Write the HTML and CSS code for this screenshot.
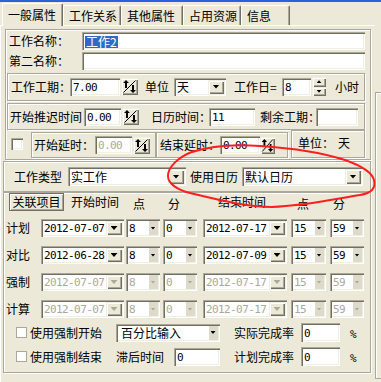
FILE: index.html
```html
<!DOCTYPE html>
<html lang="zh-CN">
<head>
  <meta charset="UTF-8">
  <title>工作属性</title>
  <link rel="stylesheet" href="styles.css">
</head>
<body>
  <svg class="defs" width="0" height="0">
    <symbol id="spin-ico" viewBox="0 0 17 17">
      <path d="M2.5 14.5 L14.5 2.5" stroke="#000" fill="none"/>
      <path d="M5 2 L8 5 H6 V10 H4 V5 H2 Z" fill="#000"/>
      <path d="M12 15 L9 12 H11 V7 H13 V12 H15 Z" fill="#000"/>
    </symbol>
  </svg>

  <div class="win">
    <div class="titlebar"></div>

    <div class="tabs">
      <div class="tab on t1">一般属性</div>
      <div class="tab t2">工作关系</div>
      <div class="tab t3">其他属性</div>
      <div class="tab t4">占用资源</div>
      <div class="tab t5">信息</div>
    </div>

    <div class="main">
      <div class="panel">

        <!-- 名称 / 工期 -->
        <div class="grp grp-a">
          <div class="name-row">
            <span class="lbl name-lbl">工作名称：</span>
            <div class="tb name-tb"><span class="sel">工作2</span></div>
          </div>
          <div class="name-row">
            <span class="lbl name-lbl">第二名称：</span>
            <div class="tb name-tb"></div>
          </div>

          <div class="grp grp-b">
            <span class="lbl" style="width:59px">工作工期：</span>
            <div class="tb num" style="width:50px">7.00</div>
            <div class="spin"><svg width="17" height="17"><use href="#spin-ico"/></svg></div>
            <span class="lbl" style="margin-left:7px">单位</span>
            <div class="combo" style="width:52px;margin-left:5px"><span class="val">天</span><span class="btn"></span></div>
            <span class="lbl" style="width:48px;margin-left:8px">工作日=</span>
            <div class="tb num" style="width:29px">8</div>
            <div class="spin2"><span class="up"></span><span class="dn"></span></div>
            <span class="lbl" style="margin-left:9px">小时</span>
          </div>

          <div class="grp grp-c">
            <span class="lbl" style="width:74px">开始推迟时间</span>
            <div class="tb num" style="width:37px">0.00</div>
            <div class="spin"><svg width="17" height="17"><use href="#spin-ico"/></svg></div>
            <span class="lbl" style="width:58px;margin-left:12px">日历时间：</span>
            <div class="tb num" style="width:46px">11</div>
            <span class="lbl" style="width:56px;margin-left:5px">剩余工期：</span>
            <div class="tb" style="width:42px"></div>
          </div>

          <div class="row-d">
            <div class="chk"></div>
            <div class="grp grp-d">
              <span class="lbl" style="width:61px">开始延时：</span>
              <div class="tb num dis" style="width:37px">0.00</div>
              <div class="spin"><svg width="17" height="17"><use href="#spin-ico"/></svg></div>
            </div>
            <div class="grp grp-e">
              <span class="lbl" style="width:60px">结束延时：</span>
              <div class="tb num" style="width:40px">0.00</div>
              <div class="spin narrow"><svg width="15" height="17" viewBox="0 0 17 17" preserveAspectRatio="none"><use href="#spin-ico"/></svg></div>
            </div>
            <div class="grp grp-f">
              <span class="lbl">单位：</span><span class="lbl unit-val">天</span>
            </div>
          </div>
        </div>

        <!-- 类型 / 日历 -->
        <div class="grp grp-g">
          <span class="lbl" style="width:54px">工作类型</span>
          <div class="combo" style="width:118px;height:19px"><span class="val">实工作</span><span class="btn"></span></div>
          <span class="lbl" style="width:52px;margin-left:4px">使用日历</span>
          <div class="combo" style="width:121px;height:19px"><span class="val">默认日历</span><span class="btn"></span></div>
        </div>

        <!-- 时间 -->
        <div class="grp grp-h">
          <div class="hdr">
            <div class="push">关联项目</div>
            <span class="lbl" style="margin-left:7px">开始时间</span>
            <span class="lbl low" style="margin-left:14px">点</span>
            <span class="lbl low" style="margin-left:23px">分</span>
            <span class="lbl" style="margin-left:38px">结束时间</span>
            <span class="lbl low" style="margin-left:31px">点</span>
            <span class="lbl low" style="margin-left:24px">分</span>
          </div>

          <div class="trow">
            <span class="rl">计划</span>
            <div class="combo c-date"><span class="val num">2012-07-07</span><span class="btn"></span></div>
            <div class="combo sm c-hr"><span class="val num">8</span><span class="btn"></span></div>
            <div class="combo sm c-min"><span class="val num">0</span><span class="btn"></span></div>
            <div class="combo c-edate"><span class="val num">2012-07-17</span><span class="btn"></span></div>
            <div class="combo sm c-ehr"><span class="val num">15</span><span class="btn"></span></div>
            <div class="combo sm c-emin"><span class="val num">59</span><span class="btn"></span></div>
          </div>
          <div class="trow">
            <span class="rl">对比</span>
            <div class="combo c-date"><span class="val num">2012-06-28</span><span class="btn"></span></div>
            <div class="combo sm c-hr"><span class="val num">8</span><span class="btn"></span></div>
            <div class="combo sm c-min"><span class="val num">0</span><span class="btn"></span></div>
            <div class="combo c-edate"><span class="val num">2012-07-09</span><span class="btn"></span></div>
            <div class="combo sm c-ehr"><span class="val num">15</span><span class="btn"></span></div>
            <div class="combo sm c-emin"><span class="val num">59</span><span class="btn"></span></div>
          </div>
          <div class="trow dis">
            <span class="rl">强制</span>
            <div class="combo c-date"><span class="val num">2012-07-07</span><span class="btn"></span></div>
            <div class="combo sm c-hr"><span class="val num">8</span><span class="btn"></span></div>
            <div class="combo sm c-min"><span class="val num">0</span><span class="btn"></span></div>
            <div class="combo c-edate"><span class="val num">2012-07-17</span><span class="btn"></span></div>
            <div class="combo sm c-ehr"><span class="val num">15</span><span class="btn"></span></div>
            <div class="combo sm c-emin"><span class="val num">59</span><span class="btn"></span></div>
          </div>
          <div class="trow dis">
            <span class="rl">计算</span>
            <div class="combo c-date"><span class="val num">2012-07-07</span><span class="btn"></span></div>
            <div class="combo sm c-hr"><span class="val num">8</span><span class="btn"></span></div>
            <div class="combo sm c-min"><span class="val num">0</span><span class="btn"></span></div>
            <div class="combo c-edate"><span class="val num">2012-07-17</span><span class="btn"></span></div>
            <div class="combo sm c-ehr"><span class="val num">15</span><span class="btn"></span></div>
            <div class="combo sm c-emin"><span class="val num">59</span><span class="btn"></span></div>
          </div>

          <div class="opt-row">
            <div class="chk flat"></div>
            <span class="lbl opt-lbl">使用强制开始</span>
            <div class="combo sm pct"><span class="val">百分比输入</span><span class="btn"></span></div>
            <span class="lbl rate-lbl">实际完成率</span>
            <div class="tb num rate-tb">0</div>
            <span class="pc">%</span>
          </div>
          <div class="opt-row">
            <div class="chk flat"></div>
            <span class="lbl opt-lbl">使用强制结束</span>
            <span class="lbl" style="width:48px;margin-left:14px">滞后时间</span>
            <div class="tb num" style="width:46px;margin-left:10px">0</div>
            <span class="lbl rate-lbl">计划完成率</span>
            <div class="tb num rate-tb">0</div>
            <span class="pc">%</span>
          </div>
        </div>

      </div>
      <div class="side"></div>
    </div>

    <svg class="mark" width="381" height="382">
      <path d="M192 152 C210 146 235 144 260 146 C290 148 320 152 345 160 C362 166 372 172 374 180 C376 188 372 193 360 195 C335 199 305 206 272 207 C245 207 215 199 190 193 C178 190 168 184 168 176 C168 168 176 158 194 151"
            fill="none" stroke="#ff1e1e" stroke-width="2" stroke-linecap="round"/>
    </svg>
  </div>
</body>
</html>
```

FILE: styles.css
```css
* {
  margin: 0;
  padding: 0;
  box-sizing: border-box;
}

:root {
  --sunk: inset 1px 1px 0 #ACA899, inset 2px 2px 0 #716F64, inset -1px -1px 0 #fff, inset -2px -2px 0 #F1EFE2;
  --raised: inset 1px 1px 0 #F1EFE2, inset 2px 2px 0 #fff, inset -1px -1px 0 #716F64, inset -2px -2px 0 #ACA899;
}

body {
  background: #ECE9D8;
  font: 12px/1 "Noto Sans CJK SC", "Liberation Sans", sans-serif;
  color: #000;
}

.defs {
  position: absolute;
}

.win {
  position: relative;
  width: 381px;
  height: 382px;
  overflow: hidden;
}

.titlebar {
  height: 2px;
  background: #2a62d8;
}

/* tabs */
.tabs {
  display: flex;
  align-items: flex-end;
  height: 23px;
  padding-left: 2px;
}

.tab {
  height: 20px;
  padding: 4px 0 0 5px;
  border-top: 1px solid #fff;
  border-left: 1px solid #fff;
  border-right: 1px solid #716F64;
  border-radius: 2px 2px 0 0;
  box-shadow: inset -1px 0 0 #ACA899;
  white-space: nowrap;
}

.tab.on {
  position: relative;
  z-index: 1;
  height: 23px;
  margin-bottom: -1px;
  padding-top: 5px;
  background: #ECE9D8;
}

.t1 { width: 61px; }
.t2 { width: 58px; }
.t3 { width: 62px; }
.t4 { width: 58px; }
.t5 { width: 49px; }

.main {
  display: flex;
  height: 357px;
}

.panel {
  width: 375px;
  flex: none;
  border-top: 1px solid #fff;
  border-left: 1px solid #fff;
  padding: 3px 0 0 4px;
}

.side {
  flex: 1;
  margin-top: 67px;
  height: 287px;
  border-left: 1px solid #ACA899;
  border-top: 1px solid #ACA899;
  border-bottom: 1px solid #ACA899;
  box-shadow: inset 1px 1px 0 #fff;
}

/* group boxes */
.grp {
  border: 1px solid #ACA899;
  box-shadow: inset 1px 1px 0 #fff, 1px 1px 0 #fff;
  flex: none;
}

.grp-a {
  width: 366px;
  height: 131px;
  padding: 2px 0 0 1px;
}

.name-row {
  display: flex;
  align-items: center;
  height: 18px;
  padding-left: 2px;
}

.name-row + .name-row {
  margin-top: 2px;
}

.name-lbl {
  width: 73px;
}

.name-tb {
  width: 283px;
}

.grp-b,
.grp-c {
  display: flex;
  align-items: center;
  width: 358px;
}

.grp-b {
  height: 28px;
  margin-top: 3px;
  padding: 0 0 1px 3px;
}

.grp-c {
  height: 27px;
  margin-top: 2px;
  padding-left: 2px;
}

.row-d {
  display: flex;
  height: 29px;
}

.row-d .chk {
  margin: 8px 0 0 4px;
}

.grp-d,
.grp-e {
  display: flex;
  align-items: center;
  height: 26px;
  margin-top: 2px;
}

.grp-d {
  width: 125px;
  margin-left: 8px;
  padding-left: 2px;
}

.grp-e {
  width: 132px;
  padding-left: 3px;
}

.grp-f {
  display: flex;
  align-items: center;
  width: 74px;
  height: 28px;
  margin-left: 3px;
  padding: 0 0 2px 6px;
}

.unit-val {
  margin-left: 4px;
}

.grp-g {
  display: flex;
  align-items: center;
  width: 368px;
  height: 31px;
  margin: 1px 0 0 -2px;
  padding-left: 10px;
}

.grp-h {
  width: 368px;
  height: 181px;
  margin-left: -2px;
}

/* controls */
.lbl {
  white-space: nowrap;
  flex: none;
}

.tb {
  display: flex;
  align-items: center;
  height: 18px;
  padding: 1px 0 0 3px;
  background: #fff;
  box-shadow: var(--sunk);
  flex: none;
}

.num {
  font-family: "DejaVu Sans Mono", monospace;
  font-size: 11px;
  letter-spacing: -0.6px;
}

.sel {
  background: #316AC5;
  color: #fff;
  padding: 0 1px;
  line-height: 12px;
}

.dis,
.dis .val {
  color: #ACA899;
}

.spin {
  width: 17px;
  height: 17px;
  margin-left: 1px;
  background: #ECE9D8;
  box-shadow: var(--raised);
  flex: none;
}

.spin svg {
  display: block;
}

.spin.narrow {
  width: 15px;
  margin-left: 0;
}

.spin2 {
  display: flex;
  flex-direction: column;
  width: 14px;
  height: 19px;
  margin-left: 1px;
  flex: none;
}

.spin2 span {
  flex: 1;
  display: flex;
  align-items: center;
  justify-content: center;
  box-shadow: var(--raised);
}

.spin2 span::after {
  content: "";
  width: 5px;
  height: 3px;
  background: #000;
}

.spin2 .up::after {
  clip-path: polygon(50% 0, 100% 100%, 0 100%);
}

.spin2 .dn::after {
  clip-path: polygon(0 0, 100% 0, 50% 100%);
}

.combo {
  display: flex;
  height: 18px;
  padding: 2px;
  background: #fff;
  box-shadow: var(--sunk);
  flex: none;
}

.combo .val {
  flex: 1;
  display: flex;
  align-items: center;
  padding: 1px 0 0 1px;
  white-space: nowrap;
  overflow: hidden;
}

.combo .btn {
  width: 16px;
  display: flex;
  align-items: center;
  justify-content: center;
  background: #ECE9D8;
  box-shadow: var(--raised);
}

.combo .btn::after {
  content: "";
  width: 7px;
  height: 4px;
  background: #000;
  clip-path: polygon(0 0, 100% 0, 50% 100%);
}

.combo.sm .btn {
  width: 10px;
  background: #DEDACB;
  box-shadow: inset 1px 0 0 #fff;
}

.combo.sm .btn::after {
  width: 5px;
  height: 3px;
}

.dis .combo .btn::after {
  background: #ACA899;
}

.chk {
  width: 12px;
  height: 12px;
  background: #fff;
  box-shadow: var(--sunk);
  flex: none;
}

.chk.flat {
  width: 11px;
  height: 11px;
  border: 1px solid #ACA899;
  box-shadow: none;
  margin-left: 12px;
}

.push {
  display: flex;
  align-items: center;
  justify-content: center;
  width: 55px;
  height: 18px;
  margin-left: 5px;
  border: 1px solid #716F64;
  box-shadow: inset 1px 1px 0 #fff, inset -1px -1px 0 #ACA899;
  flex: none;
}

/* time table */
.hdr {
  display: flex;
  align-items: center;
  height: 18px;
}

.low {
  padding-top: 4px;
}

.trow {
  display: flex;
  align-items: center;
  height: 18px;
  margin-top: 9px;
}

.hdr + .trow {
  margin-top: 8px;
}

.rl {
  width: 37px;
  padding-left: 2px;
  flex: none;
  color: #000;
}

.c-date { width: 83px; }
.c-hr { width: 34px; margin-left: 2px; }
.c-min { width: 34px; margin-left: 3px; }
.c-edate { width: 84px; margin-left: 6px; }
.c-ehr { width: 35px; margin-left: 4px; }
.c-emin { width: 34px; margin-left: 4px; }

.opt-row {
  display: flex;
  align-items: center;
  height: 19px;
  margin-top: 5px;
}

.opt-lbl {
  width: 72px;
  margin-left: 3px;
}

.pct {
  width: 104px;
  height: 18px;
  margin-left: 14px;
}

.pct .val {
  padding-left: 3px;
}

.rate-lbl {
  width: 60px;
  margin-left: 14px;
}

.rate-tb {
  width: 39px;
  height: 19px;
  margin-left: 7px;
}

.pc {
  margin: 3px 0 0 10px;
  font-family: "DejaVu Sans Mono", monospace;
  font-size: 11px;
}

/* red hand mark */
.mark {
  position: absolute;
  top: 0;
  left: 0;
  pointer-events: none;
}
```
